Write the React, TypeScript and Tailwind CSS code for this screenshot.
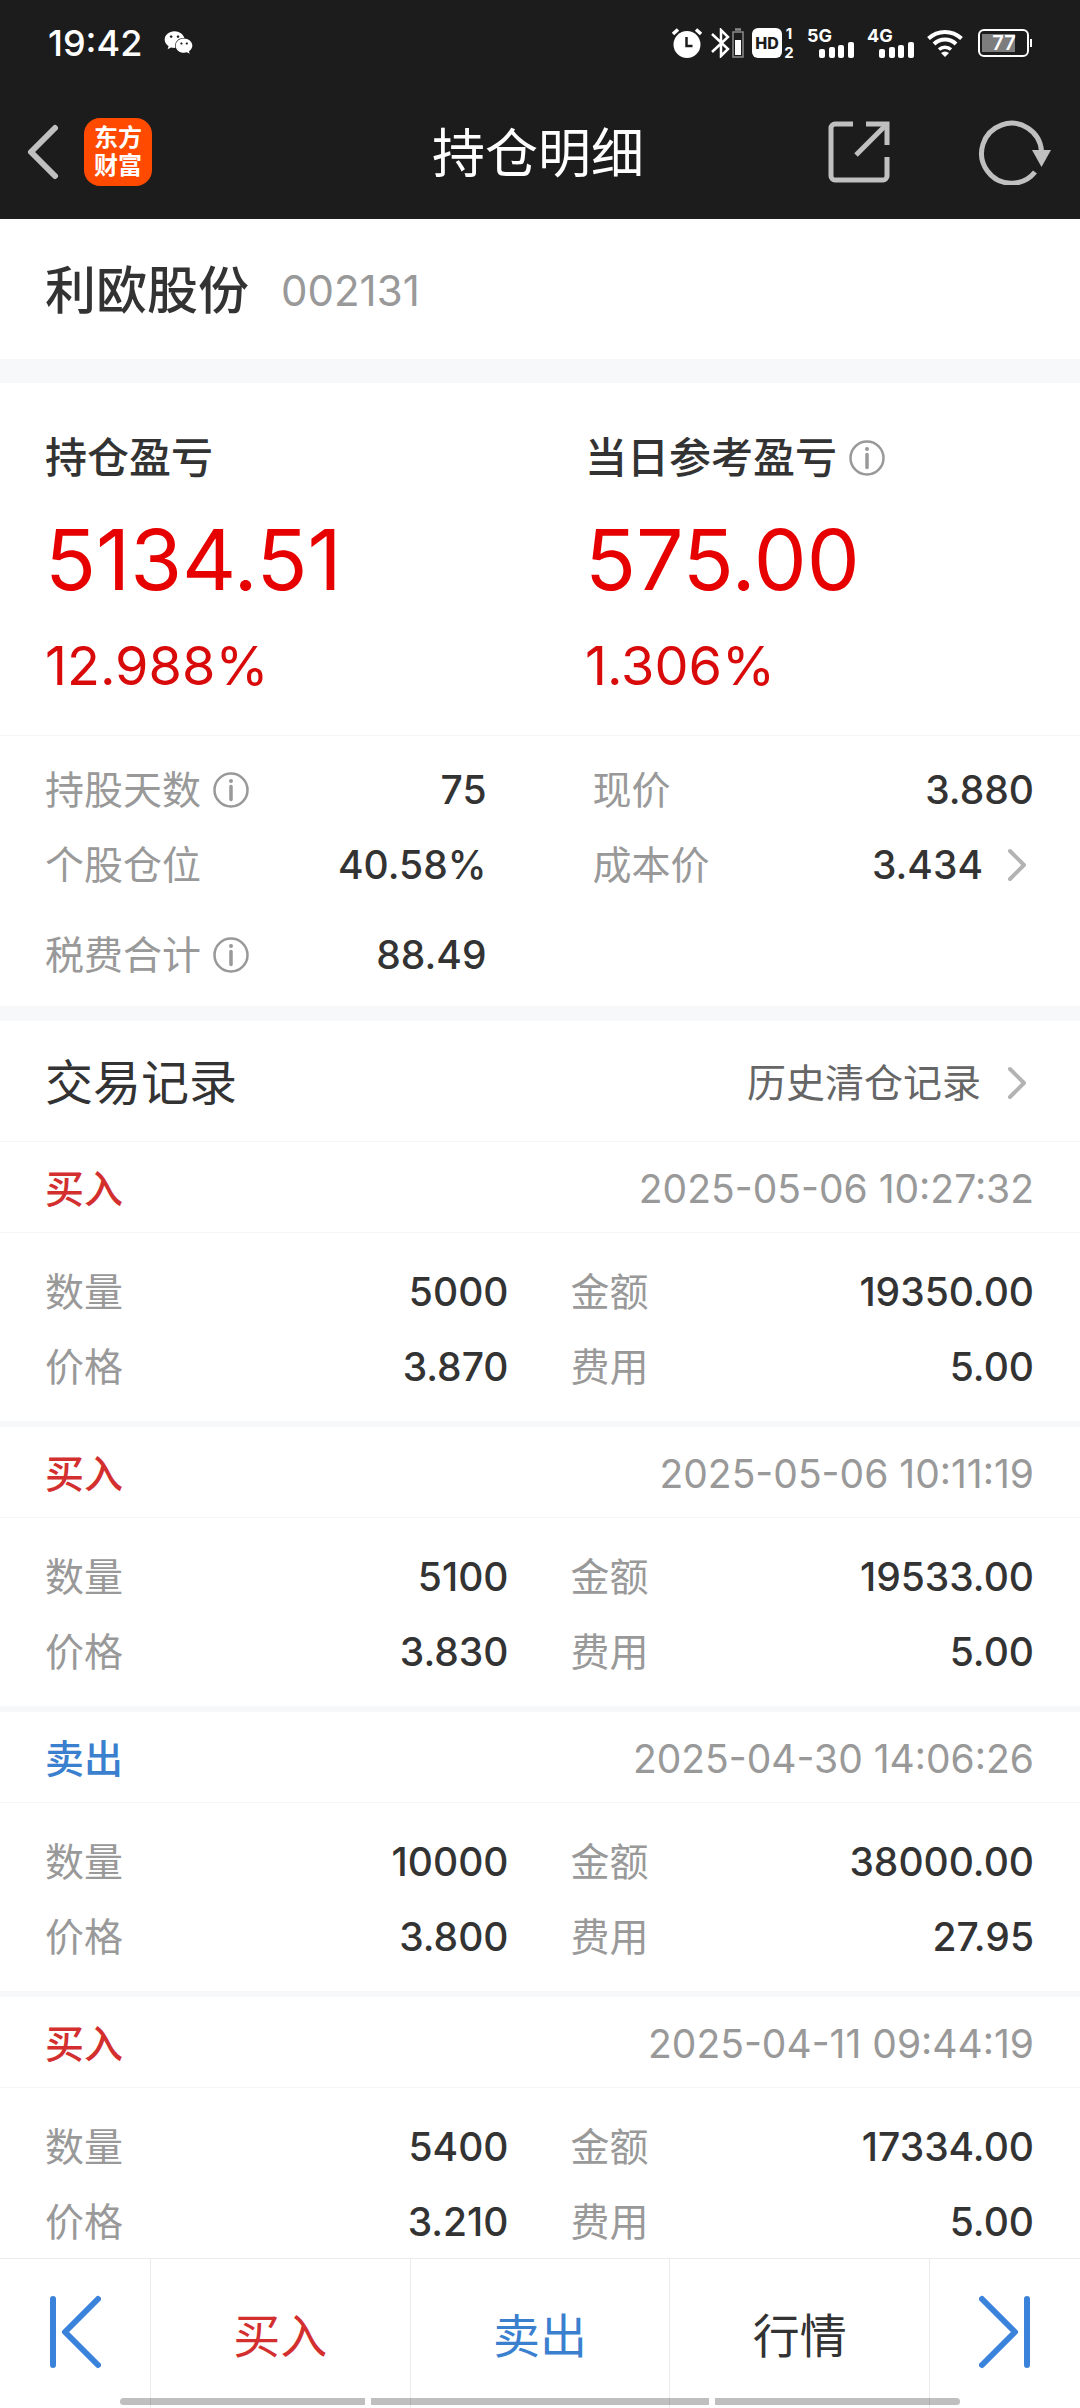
import type { ReactNode } from 'react'
import { FaWeixin } from 'react-icons/fa'

type Trade = {
  side: 'buy' | 'sell'
  time: string
  qty: string
  amount: string
  price: string
  fee: string
}

const TRADES: Trade[] = [
  { side: 'buy', time: '2025-05-06 10:27:32', qty: '5000', amount: '19350.00', price: '3.870', fee: '5.00' },
  { side: 'buy', time: '2025-05-06 10:11:19', qty: '5100', amount: '19533.00', price: '3.830', fee: '5.00' },
  { side: 'sell', time: '2025-04-30 14:06:26', qty: '10000', amount: '38000.00', price: '3.800', fee: '27.95' },
  { side: 'buy', time: '2025-04-11 09:44:19', qty: '5400', amount: '17334.00', price: '3.210', fee: '5.00' },
]

export default function App() {
  return (
    <div className="h-screen flex flex-col bg-white text-[#333333] font-['Inter','Noto_Sans_CJK_SC',sans-serif]">
      <header className="shrink-0 bg-[#1c1c1c]">
        <StatusBar />
        <div className="h-[134px] grid grid-cols-[1fr_auto_1fr] items-center pl-6 pr-7">
          <div className="flex items-center gap-6">
            <button type="button" aria-label="返回">
              <svg className="w-9 h-[60px]" viewBox="0 0 36 60" fill="none" stroke="#c0c0c0" strokeWidth="6" strokeLinecap="round" strokeLinejoin="round">
                <path d="M31 6 7 30l24 24" />
              </svg>
            </button>
            <div className="w-[68px] h-[68px] rounded-2xl bg-[#ff4a00] text-white text-[24px] leading-[28px] font-bold text-center flex flex-col justify-center">
              <span>东方</span>
              <span>财富</span>
            </div>
          </div>
          <h1 className="pt-1 text-[53px] leading-[72px] font-normal text-white">持仓明细</h1>
          <div className="flex items-center justify-end gap-[88px]">
            <button type="button" aria-label="分享">
              <svg className="w-[62px] h-[62px]" viewBox="0 0 62 62" fill="none" stroke="#c0c0c0" strokeWidth="5">
                <path d="M25 3H7a4 4 0 0 0-4 4v48a4 4 0 0 0 4 4h48a4 4 0 0 0 4-4V36" />
                <path d="M38 3h21v21" />
                <path d="M58 4 28 34" />
              </svg>
            </button>
            <button type="button" aria-label="刷新">
              <svg className="w-[74px] h-[66px]" viewBox="0 0 74 66" fill="none" stroke="#c0c0c0" strokeWidth="5">
                <path d="M57 53A30 30 0 1 1 63.500 32" />
                <path d="M54 31h19L63.500 48z" fill="#c0c0c0" stroke="none" />
              </svg>
            </button>
          </div>
        </div>
      </header>

      <main className="flex-1 min-h-0 overflow-y-auto [scrollbar-width:none]">
        <section className="h-[140px] pt-1 px-[45px] flex items-center gap-8">
          <h2 className="text-[51px] leading-[72px] font-medium">利欧股份</h2>
          <span className="text-[42px] leading-[60px] text-[#999999]">002131</span>
        </section>

        <section className="border-t-[24px] border-[#f6f8fa] grid grid-cols-2 pt-[45px] pb-[33px]">
          <Profit label="持仓盈亏" value="5134.51" percent="12.988%" />
          <Profit label="当日参考盈亏" value="575.00" percent="1.306%" info />
        </section>

        <section className="border-t border-[#f5f5f5] pl-[45px] pr-[46px] pt-4 pb-[14px]">
          <dl className="grid grid-cols-2 gap-x-[106px]">
            <Field label="持股天数" value="75" info />
            <Field label="现价" value="3.880" />
            <Field label="个股仓位" value="40.58%" />
            <Field label="成本价" value="3.434" more />
          </dl>
          <dl className="grid grid-cols-2 gap-x-[106px] pt-[15px]">
            <Field label="税费合计" value="88.49" info />
          </dl>
        </section>

        <section className="border-t-[15px] border-[#f6f8fa]">
          <div className="h-[120px] pl-[45px] pr-[46px] pt-1 flex items-center justify-between">
            <h2 className="text-[48px] leading-[72px] font-normal">交易记录</h2>
            <a href="#history" className="flex items-center gap-[26px] text-[39px] leading-[60px] text-[#666666]">
              历史清仓记录
              <Chevron />
            </a>
          </div>
          <ul className="border-t border-[#f5f5f5]">
            {TRADES.map(t => <TradeItem key={t.time} trade={t} />)}
          </ul>
        </section>
      </main>

      <nav className="relative shrink-0 h-[150px] flex border-t border-[#ebebeb] text-[47px] leading-[72px]">
        <button type="button" aria-label="上一只" className="w-[150px] pb-1 flex items-center justify-center">
          <svg className="w-[52px] h-[74px]" viewBox="0 0 52 74" fill="none" stroke="#3b82db" strokeWidth="6" strokeLinecap="round" strokeLinejoin="round">
            <path d="M4 4v66M49 4 16 37l33 33" />
          </svg>
        </button>
        <button type="button" className="flex-1 pt-1 border-l border-[#ebebeb] text-[#d32f2f]">买入</button>
        <button type="button" className="flex-1 pt-1 border-l border-[#ebebeb] text-[#3b7fcf]">卖出</button>
        <button type="button" className="flex-1 pt-1 border-l border-[#ebebeb]">行情</button>
        <button type="button" aria-label="下一只" className="w-[151px] pb-1 border-l border-[#ebebeb] flex items-center justify-center">
          <svg className="w-[52px] h-[74px]" viewBox="0 0 52 74" fill="none" stroke="#3b82db" strokeWidth="6" strokeLinecap="round" strokeLinejoin="round">
            <path d="M48 4v66M3 4l33 33L3 70" />
          </svg>
        </button>
        {/* system gesture bar */}
        <div className="absolute inset-x-[120px] bottom-[3px] h-[7px] flex gap-[6px] pointer-events-none">
          <div className="w-[245px] rounded-l-full bg-black/25" />
          <div className="flex-1 bg-black/25" />
          <div className="w-[245px] rounded-r-full bg-black/25" />
        </div>
      </nav>
    </div>
  )
}

function StatusBar() {
  return (
    <div className="h-[85px] pl-12 pr-12 flex items-center justify-between text-white">
      <div className="flex items-center gap-[22px]">
        <span className="text-[36px] leading-[48px] font-medium">19:42</span>
        <FaWeixin className="w-[29px] h-[29px]" />
      </div>
      <div className="flex items-center">
        <svg className="w-[30px] h-[30px]" viewBox="0 0 30 30" fill="#fff">
          <circle cx="15" cy="16.500" r="13.500" />
          <path d="M1 6 6 1.500M29 6 24 1.500" stroke="#fff" strokeWidth="3.500" />
          <path d="M14.500 9v9h6" fill="none" stroke="#1c1c1c" strokeWidth="2.500" />
        </svg>
        <svg className="w-[34px] h-[30px] ml-2" viewBox="0 0 34 30" fill="none" stroke="#fff" strokeWidth="2.500">
          <path d="M2 6l16 15-7 7V2l7 7L2 24" />
          <path d="M25 1.500h6" stroke="#8a8a8a" />
          <path d="M23 4h10v25H23z" stroke="#8a8a8a" strokeWidth="1.500" />
          <path d="M25 12h6v15h-6z" fill="#fff" stroke="none" />
        </svg>
        <svg className="w-[43px] h-[42px] ml-2" viewBox="0 -6 43 42" fill="#fff">
          <rect width="30" height="30" rx="6" />
          <text x="15" y="21" fontSize="16" fontWeight="800" textAnchor="middle" fill="#1c1c1c">HD</text>
          <text x="37" y="11" fontSize="15" fontWeight="700" textAnchor="middle">1</text>
          <text x="37" y="30" fontSize="15" fontWeight="700" textAnchor="middle">2</text>
        </svg>
        <Signal label="5G" />
        <Signal label="4G" />
        <svg className="w-9 h-7 ml-3" viewBox="0 0 36 28" fill="none" stroke="#fff" strokeWidth="4">
          <path d="M1.500 9.500a24 24 0 0 1 33 0" />
          <path d="M7 15a16 16 0 0 1 22 0" />
          <path d="M12 20.500a9 9 0 0 1 12 0" strokeWidth="3.500" />
          <path d="M14 24a6 6 0 0 1 8 0l-4 4z" fill="#fff" stroke="none" />
        </svg>
        <svg className="w-[54px] h-7 ml-[15px]" viewBox="0 0 54 28" fill="none">
          <rect x="1" y="1" width="49" height="26" rx="5" stroke="#fff" strokeWidth="2" />
          <path d="M4 5h33v18H4z" fill="#7d7d7d" />
          <path d="M53 10v8" stroke="#fff" strokeWidth="2" />
          <text x="26" y="21" fontSize="20" fontWeight="600" textAnchor="middle" fill="#fff">77</text>
        </svg>
      </div>
    </div>
  )
}

function Signal({ label }: { label: string }) {
  return (
    <svg className="w-12 h-[42px] ml-3" viewBox="0 -6 48 42" fill="#fff">
      <text x="0" y="14" fontSize="18" fontWeight="700">{label}</text>
      <rect x="12" y="21" width="6" height="9" rx="2" />
      <rect x="22" y="19" width="6" height="11" rx="2" />
      <rect x="31" y="17" width="6" height="13" rx="2" />
      <rect x="41" y="14" width="6" height="16" rx="2" />
    </svg>
  )
}

function Profit({ label, value, percent, info }: { label: string; value: string; percent: string; info?: boolean }) {
  return (
    <div className="pl-[45px]">
      <div className="flex items-center gap-3 text-[42px] leading-[60px] font-medium">
        {label}
        {info && <Info />}
      </div>
      <p className="mt-4 text-[84px] leading-[112px] text-[#e60000]">{value}</p>
      <p className="mt-[14px] text-[54px] leading-[72px] text-[#d80a0a]">{percent}</p>
    </div>
  )
}

function Field({ label, value, info, more }: { label: string; value: ReactNode; info?: boolean; more?: boolean }) {
  return (
    <div className="h-[75px] flex items-center justify-between text-[39px] leading-[60px]">
      <dt className="flex items-center gap-3 text-[#999999]">
        {label}
        {info && <Info />}
      </dt>
      <dd className="font-medium">
        {more
          ? <a href="#cost" className="flex items-center gap-6">{value}<Chevron /></a>
          : value}
      </dd>
    </div>
  )
}

function TradeItem({ trade }: { trade: Trade }) {
  return (
    <li className="border-b-[6px] border-[#f6f8fa]">
      <div className="h-[91px] pt-1 pl-[45px] pr-[46px] flex items-center justify-between border-b border-[#f5f5f5] text-[39px] leading-[60px]">
        {trade.side === 'buy'
          ? <span className="font-medium text-[#d32f2f]">买入</span>
          : <span className="font-medium text-[#3b7fcf]">卖出</span>}
        <time className="text-[#999999]">{trade.time}</time>
      </div>
      <dl className="grid grid-cols-2 gap-x-[62px] pl-[45px] pr-[46px] pt-[21px] pb-[17px]">
        <Field label="数量" value={trade.qty} />
        <Field label="金额" value={trade.amount} />
        <Field label="价格" value={trade.price} />
        <Field label="费用" value={trade.fee} />
      </dl>
    </li>
  )
}

function Info() {
  return (
    <svg className="w-9 h-9" viewBox="0 0 36 36" fill="none" stroke="#999999" strokeWidth="2.500">
      <circle cx="18" cy="18" r="16.500" />
      <path d="M18 14.500v13" strokeWidth="3.500" strokeLinecap="round" />
      <circle cx="18" cy="9" r="2" fill="#999999" stroke="none" />
    </svg>
  )
}

function Chevron() {
  return (
    <svg className="w-[27px] h-9" viewBox="0 0 27 36" fill="none" stroke="#b3b3b3" strokeWidth="4" strokeLinecap="round" strokeLinejoin="round">
      <path d="M3 4l14 14L3 32" />
    </svg>
  )
}
